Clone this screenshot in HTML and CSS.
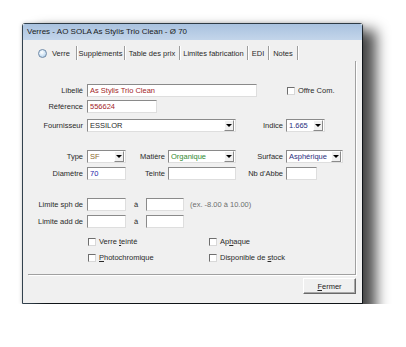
FILE: index.html
```html
<!DOCTYPE html>
<html lang="fr">
<head>
    <meta charset="UTF-8">
    <meta name="viewport" content="width=device-width, initial-scale=1.0">
    <title>Verres</title>
    <link rel="stylesheet" href="styles.css">
</head>
<body>
    <div class="window">
        <div class="title-bar">Verres - AO SOLA As Stylis Trio Clean - Ø 70</div>
        <div class="client">
            <div class="tabs">
                <div class="tab tab-verre"><span class="radio"></span>Verre</div>
                <div class="tab tab-supp">Suppléments</div>
                <div class="tab tab-prix">Table des prix</div>
                <div class="tab tab-limites">Limites fabrication</div>
                <div class="tab tab-edi">EDI</div>
                <div class="tab tab-notes">Notes</div>
            </div>

            <div class="panel">
                <div class="row">
                    <span class="label">Libellé</span>
                    <div class="field w170 txt-red">As Stylis Trio Clean</div>
                    <label class="check offre"><span class="box"></span><span>Offre Com.</span></label>
                </div>
                <div class="row gap-s">
                    <span class="label">Référence</span>
                    <div class="field w70 txt-red">556624</div>
                </div>
                <div class="row gap-m">
                    <span class="label">Fournisseur</span>
                    <div class="combo w149"><span class="value">ESSILOR</span><span class="arrow"></span></div>
                    <span class="mid-label w47">Indice</span>
                    <div class="combo w39"><span class="value txt-navy">1.665</span><span class="arrow"></span></div>
                </div>

                <div class="row gap-l">
                    <span class="label">Type</span>
                    <div class="combo w39"><span class="value txt-brown">SF</span><span class="arrow"></span></div>
                    <span class="mid-label w39">Matière</span>
                    <div class="combo w68"><span class="value txt-green">Organique</span><span class="arrow"></span></div>
                    <span class="mid-label w47">Surface</span>
                    <div class="combo w57"><span class="value txt-navy">Asphérique</span><span class="arrow"></span></div>
                </div>
                <div class="row gap-xs">
                    <span class="label">Diamètre</span>
                    <div class="field w39 txt-blue">70</div>
                    <span class="mid-label w39">Teinte</span>
                    <div class="field w68"></div>
                    <span class="mid-label w47">Nb d'Abbe</span>
                    <div class="field w31"></div>
                </div>

                <div class="row gap-l">
                    <span class="label">Limite sph de</span>
                    <div class="field w39"></div>
                    <span class="to">à</span>
                    <div class="field w38"></div>
                    <span class="hint">(ex. -8.00 à 10.00)</span>
                </div>
                <div class="row gap-xs">
                    <span class="label">Limite add de</span>
                    <div class="field w39"></div>
                    <span class="to">à</span>
                    <div class="field w38"></div>
                </div>

                <div class="row checks gap-c">
                    <label class="check first"><span class="box"></span><span>Verre <u>t</u>einté</span></label>
                    <label class="check"><span class="box"></span><span>Ap<u>h</u>aque</span></label>
                </div>
                <div class="row checks gap-s">
                    <label class="check first"><span class="box"></span><span><u>P</u>hotochromique</span></label>
                    <label class="check"><span class="box"></span><span>Disponible de <u>s</u>tock</span></label>
                </div>
            </div>

            <div class="footer">
                <button class="btn"><u>F</u>ermer</button>
            </div>
        </div>
    </div>
</body>
</html>
```

FILE: styles.css
```css
* {
    box-sizing: border-box;
}

body {
    margin: 0;
    padding: 23px 0 0 22px;
    background: #ffffff;
    font-family: "Liberation Sans", Arial, sans-serif;
    font-size: 7.5px;
    color: #2a2a2a;
}

/* Dialog window */
.window {
    position: relative;
    z-index: 0;
    width: 341px;
    height: 281px;
    display: flex;
    flex-direction: column;
    background: #f0f0f0;
    border: 1px solid #34434f;
    border-radius: 3px 3px 0 0;
    box-shadow: 0 0 4px rgba(0, 0, 0, 0.2);
}

/* Drop shadow behind the window (right and bottom) */
.window::before {
    content: "";
    position: absolute;
    z-index: -1;
    left: 14px;
    top: 6px;
    right: -14px;
    bottom: -18px;
    background: rgba(0, 0, 0, 0.7);
    filter: blur(7px);
}

.window::after {
    content: "";
    position: absolute;
    z-index: -1;
    left: 0;
    top: 0;
    right: 0;
    bottom: 0;
    background: #f0f0f0;
}

.title-bar {
    height: 16px;
    line-height: 16px;
    padding-left: 4px;
    font-size: 8px;
    color: #1b1b1b;
    background: linear-gradient(#a9c2df, #c3d5ea);
    border-radius: 2px 2px 0 0;
}

.client {
    flex: 1;
    display: flex;
    flex-direction: column;
    padding: 3px 6px 0 5px;
}

/* Tabs */
.tabs {
    display: flex;
    height: 18px;
    padding-left: 8px;
}

.tab {
    height: 14px;
    margin-top: 3px;
    display: flex;
    align-items: center;
    justify-content: center;
    border-right: 1px solid #9c9c9c;
    box-shadow: 1px 0 0 #ffffff;
    white-space: nowrap;
}

.tab-verre {
    width: 41px;
    justify-content: flex-start;
    padding-left: 2px;
}
.tab-supp { width: 48px; }
.tab-prix { width: 55px; }
.tab-limites { width: 68px; }
.tab-edi { width: 21px; }
.tab-notes { width: 29px; }

.radio {
    width: 9px;
    height: 9px;
    margin-right: 5px;
    border-radius: 50%;
    border: 1px solid #6f8aa8;
    background: radial-gradient(circle at 40% 35%, #ffffff, #cfe3f4 55%, #9cbbd8);
}

/* Main panel */
.panel {
    height: 214px;
    padding-top: 23px;
    border-right: 1px solid #a0a0a0;
    border-bottom: 1px solid #a0a0a0;
    box-shadow: 1px 1px 0 #ffffff;
}

.row {
    display: flex;
    align-items: center;
    height: 13px;
}

.gap-xs { margin-top: 4px; }
.gap-s { margin-top: 3px; }
.gap-m { margin-top: 6px; }
.gap-l { margin-top: 18px; }
.gap-c { margin-top: 7px; }

.label {
    width: 55px;
    margin-right: 4px;
    text-align: right;
    white-space: nowrap;
}

.mid-label {
    margin-right: 3px;
    text-align: right;
    white-space: nowrap;
}

.field,
.combo {
    height: 13px;
    background: #ffffff;
    border: 1px solid;
    border-color: #8a8a8a #dedede #dedede #8a8a8a;
    white-space: nowrap;
    overflow: hidden;
}

.field {
    padding-left: 2px;
    line-height: 11px;
}

.combo {
    display: flex;
    align-items: stretch;
}

.combo .value {
    flex: 1;
    padding-left: 2px;
    line-height: 11px;
    overflow: hidden;
}

.combo .arrow {
    width: 10px;
    margin: 0 1px 0 0;
    display: flex;
    align-items: center;
    justify-content: center;
    background: #f0f0f0;
    border: 1px solid;
    border-color: #ffffff #8a8a8a #8a8a8a #ffffff;
}

.combo .arrow::after {
    content: "";
    border-left: 3px solid transparent;
    border-right: 3px solid transparent;
    border-top: 3px solid #000;
}

.w31 { width: 31px; }
.w38 { width: 38px; }
.w39 { width: 39px; }
.w47 { width: 47px; }
.w57 { width: 57px; }
.w68 { width: 68px; }
.w70 { width: 70px; }
.w149 { width: 149px; }
.w170 { width: 170px; }

.txt-red { color: #a3262a; }
.txt-navy { color: #2b2f7e; }
.txt-blue { color: #2626a8; }
.txt-brown { color: #8a6a2e; }
.txt-green { color: #2f8a32; }

.to {
    width: 20px;
    text-align: center;
}

.hint {
    margin-left: 6px;
    color: #6e6e6e;
    white-space: nowrap;
}

/* Check boxes */
.check {
    display: flex;
    align-items: center;
    white-space: nowrap;
}

.box {
    width: 8px;
    height: 8px;
    margin-right: 3px;
    background: #ffffff;
    border: 1px solid;
    border-color: #6e6e6e #d8d8d8 #d8d8d8 #6e6e6e;
}

.offre {
    margin-left: 30px;
}

.checks {
    padding-left: 60px;
}

.check.first {
    width: 121px;
}

/* Bottom button */
.footer {
    display: flex;
    justify-content: flex-end;
    margin-top: 3px;
}

.btn {
    width: 53px;
    height: 16px;
    padding: 0;
    font-family: inherit;
    font-size: 7.5px;
    color: #222;
    background: #f0f0f0;
    border: 1px solid;
    border-color: #ffffff #6a6a6a #6a6a6a #ffffff;
    box-shadow: inset -1px -1px 0 #a8a8a8;
}
```
